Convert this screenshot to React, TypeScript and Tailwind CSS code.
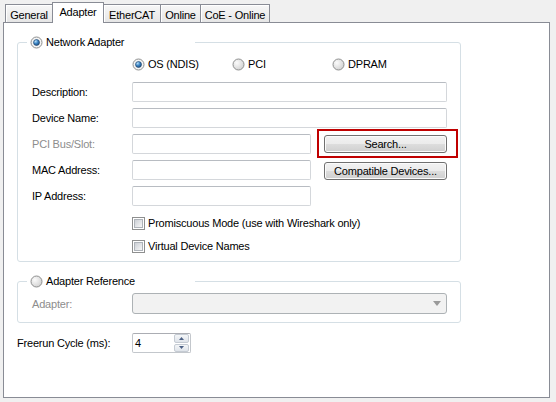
import { useId } from "react";

const tabs = ["General", "Adapter", "EtherCAT", "Online", "CoE - Online"];
const tabWidths = ["w-[48px]", "w-[52px]", "w-[58px]", "w-[41px]", "w-[70px]"];

function Radio({ checked = false }: { checked?: boolean }) {
  const id = useId();
  return (
    <svg width="13" height="13" viewBox="0 0 13 13" className="shrink-0">
      <defs>
        <radialGradient id={`${id}-bg`} cx="0.35" cy="0.35" r="0.7">
          <stop offset="0" stopColor="#fbfbfb" />
          <stop offset="1" stopColor="#d2d2d2" />
        </radialGradient>
        <radialGradient id={`${id}-dot`} cx="0.35" cy="0.3" r="0.75">
          <stop offset="0" stopColor="#b9e2fb" />
          <stop offset="0.5" stopColor="#3d86c6" />
          <stop offset="1" stopColor="#1a4b7e" />
        </radialGradient>
      </defs>
      <circle cx="6.5" cy="6.5" r="5.5" fill={checked ? "#f4f4f4" : `url(#${id}-bg)`} stroke="#8e8f8f" />
      {checked && <circle cx="6.5" cy="6.5" r="3" fill={`url(#${id}-dot)`} stroke="#1c3f66" strokeWidth="0.6" />}
    </svg>
  );
}

function CheckBox() {
  return (
    <div className="w-[13px] h-[13px] shrink-0 border border-[#8e8f8f] bg-white p-px">
      <div className="w-full h-full border border-[#aeb3b9] bg-linear-to-br from-[#cbcfd5] to-[#f7f7f7]" />
    </div>
  );
}

function TextBox({ width }: { width: string }) {
  return (
    <div
      className={`${width} h-[20px] bg-white rounded-[2px] border border-[#d4d7db] border-t-[#b8bcc2]`}
    />
  );
}

function WinButton({ label }: { label: string }) {
  return (
    <button className="w-[123px] h-[18px] rounded-[3px] border border-[#707070] bg-[linear-gradient(#f2f2f2_0%,#ebebeb_50%,#dddddd_50%,#cfcfcf_100%)] shadow-[inset_0_0_0_1px_#fbfbfb] text-center leading-[15px]">
      {label}
    </button>
  );
}

function Label({ text, muted = false }: { text: string; muted?: boolean }) {
  return (
    <span className={`w-[100px] shrink-0 ${muted ? "text-[#8d8d8d]" : "text-black"}`}>{text}</span>
  );
}

export default function App() {
  return (
    <div className="w-[556px] h-[402px] overflow-hidden bg-[#f0f0f0] pl-[3px] pt-[2px] font-['Liberation_Sans',Arial,sans-serif] text-[11px] leading-[14px] tracking-[-0.2px] text-black select-none">
      {/* tab strip */}
      <div className="flex items-end h-[20px] pl-[2px]">
        {tabs.map((t, i) =>
          i === 1 ? (
            <div
              key={t}
              className={`${tabWidths[i]} h-[21px] -mb-px -ml-px relative z-10 bg-white border border-b-0 border-[#898c95] pt-[2px] text-center`}
            >
              {t}
            </div>
          ) : (
            <div
              key={t}
              className={`${tabWidths[i]} h-[18px] ${i > 0 ? "-ml-px" : ""} bg-linear-to-b from-[#f7f7f7] to-[#e6e6e6] border border-b-0 border-[#898c95] shadow-[inset_1px_1px_0_#ffffff] pt-[3px] text-center`}
            >
              {t}
            </div>
          )
        )}
      </div>

      {/* tab page */}
      <div className="w-[547px] h-[376px] bg-white border border-[#898c95] pl-[13px] pt-[12px]">
        <fieldset className="w-[444px] border border-[#d5dfe5] rounded-[3px] pl-[14px] pb-[8px]">
          <legend className="-ml-[5px] w-[168px] pl-[3px]">
            <div className="flex items-center gap-[3px] h-[14px]">
              <Radio checked />
              <span>Network Adapter</span>
            </div>
          </legend>

          <div className="flex items-center h-[14px] mt-[8px]">
            <div className="w-[100px]" />
            <div className="w-[100px] flex items-center gap-[3px]">
              <Radio checked />
              <span>OS (NDIS)</span>
            </div>
            <div className="w-[100px] flex items-center gap-[3px]">
              <Radio />
              <span>PCI</span>
            </div>
            <div className="w-[100px] flex items-center gap-[3px]">
              <Radio />
              <span>DPRAM</span>
            </div>
          </div>

          <div className="flex flex-col gap-[6px] mt-[11px]">
            <div className="flex items-center h-[20px]">
              <Label text="Description:" />
              <TextBox width="w-[315px]" />
            </div>
            <div className="flex items-center h-[20px]">
              <Label text="Device Name:" />
              <TextBox width="w-[315px]" />
            </div>
            <div className="flex items-center h-[20px]">
              <Label text="PCI Bus/Slot:" muted />
              <TextBox width="w-[179px]" />
              <div className="relative ml-[13px] flex">
                <WinButton label="Search..." />
                <div className="absolute -left-[7px] -right-[11px] -top-[6px] -bottom-[5px] border-2 border-[#c00000]" />
              </div>
            </div>
            <div className="flex items-center h-[20px]">
              <Label text="MAC Address:" />
              <TextBox width="w-[179px]" />
              <div className="ml-[13px] mt-[2px] flex">
                <WinButton label="Compatible Devices..." />
              </div>
            </div>
            <div className="flex items-center h-[20px]">
              <Label text="IP Address:" />
              <TextBox width="w-[179px]" />
            </div>
          </div>

          <div className="flex items-center h-[14px] mt-[10px] pl-[100px] gap-[3px]">
            <CheckBox />
            <span>Promiscuous Mode (use with Wireshark only)</span>
          </div>
          <div className="flex items-center h-[14px] mt-[9px] pl-[100px] gap-[3px]">
            <CheckBox />
            <span>Virtual Device Names</span>
          </div>
        </fieldset>

        <fieldset className="w-[444px] mt-[12px] border border-[#d5dfe5] rounded-[3px] pl-[14px] pb-[8px]">
          <legend className="-ml-[5px] w-[168px] pl-[3px]">
            <div className="flex items-center gap-[3px] h-[14px]">
              <Radio />
              <span>Adapter Reference</span>
            </div>
          </legend>
          <div className="flex items-center h-[21px] mt-[5px]">
            <Label text="Adapter:" muted />
            <div className="w-[315px] h-[21px] rounded-[3px] border border-[#adb2b5] bg-[#f2f2f2] flex items-center justify-end pr-[5px]">
              <svg width="8" height="5" viewBox="0 0 8 5">
                <path d="M0 0h8L4 5z" fill="#9a9a9a" />
              </svg>
            </div>
          </div>
        </fieldset>

        <div className="flex items-center h-[20px] mt-[10px]">
          <span className="w-[115px] shrink-0">Freerun Cycle (ms):</span>
          <div className="w-[59px] h-[20px] flex items-center bg-white border border-[#c3c7cc] border-t-[#abadb3] rounded-[2px]">
            <span className="flex-1 pl-[2px]">4</span>
            <div className="flex flex-col w-[15px] h-[18px] mr-px gap-px">
              <div className="flex-1 flex items-center justify-center rounded-[2px] border border-[#c5cbd3] bg-linear-to-b from-[#f4f6f8] to-[#dfe4ea]">
                <svg width="5" height="3" viewBox="0 0 5 3">
                  <path d="M0 3L2.5 0L5 3z" fill="#4d6185" />
                </svg>
              </div>
              <div className="flex-1 flex items-center justify-center rounded-[2px] border border-[#c5cbd3] bg-linear-to-b from-[#f4f6f8] to-[#dfe4ea]">
                <svg width="5" height="3" viewBox="0 0 5 3">
                  <path d="M0 0h5L2.5 3z" fill="#4d6185" />
                </svg>
              </div>
            </div>
          </div>
        </div>
      </div>
    </div>
  );
}
